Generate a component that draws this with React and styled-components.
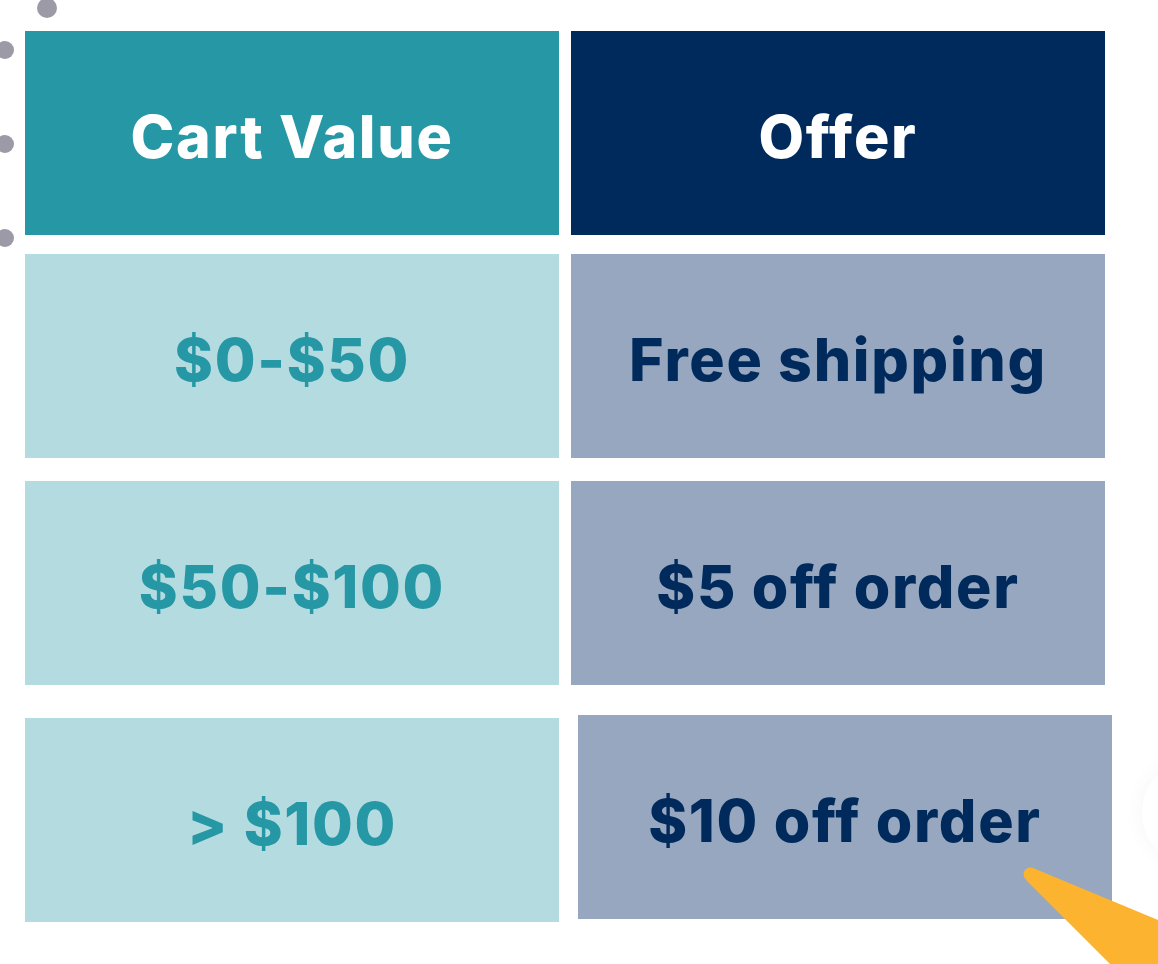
import styled, { createGlobalStyle } from "styled-components";

const GlobalStyle = createGlobalStyle`
  html, body {
    margin: 0;
    padding: 0;
    background: #fff;
    overflow: hidden;
  }
  body {
    font-family: Inter, "Open Sans", "Liberation Sans", sans-serif;
  }
`;

const palette = {
  teal: "#2697a5",
  navy: "#002a5c",
  tealLight: "#b4dbe0",
  navyLight: "#97a7bf",
};

const rows = [
  { value: "$0-$50", offer: "Free shipping", gap: 19 },
  { value: "$50-$100", offer: "$5 off order", gap: 23 },
  { value: "> $100", offer: "$10 off order", gap: 33, shifted: true },
];

const Page = styled.div`
  position: relative;
  width: 1158px;
  height: 964px;
  padding: 31px 0 0 25px;
  box-sizing: border-box;
  overflow: hidden;
`;

const Table = styled.div`
  display: flex;
  flex-direction: column;
  width: 1080px;
`;

const Row = styled.div`
  display: grid;
  grid-template-columns: 534px 534px;
  column-gap: 12px;
  margin-top: ${(p) => p.$gap || 0}px;
`;

const Cell = styled.div`
  height: 204px;
  display: flex;
  align-items: center;
  justify-content: center;
  padding-top: 6px;
  box-sizing: border-box;
  background: ${(p) => p.$bg};
  color: ${(p) => p.$fg};
  font-size: 59px;
  font-weight: 800;
  letter-spacing: 1.7px;
  ${(p) => p.$shifted && "margin: -3px -7px 0 7px;"}
`;

/* decorative dotted border peeking in from the left edge */
const DotRail = styled.div`
  position: absolute;
  left: -4px;
  top: 41px;
  display: flex;
  flex-direction: column;
  gap: 76px;
`;

const Dot = styled.span`
  display: block;
  width: ${(p) => p.$r * 2}px;
  height: ${(p) => p.$r * 2}px;
  border-radius: 50%;
  background: #9d9aa8;
`;

const TopDot = styled(Dot)`
  position: absolute;
  left: 37px;
  top: -2px;
`;

const Glow = styled.div`
  position: absolute;
  right: -64px;
  top: 765px;
  width: 80px;
  height: 95px;
  border-radius: 50%;
  background: #fff;
  box-shadow: 0 0 22px rgba(0, 0, 0, 0.045);
`;

const Pointer = styled.svg`
  position: absolute;
  left: 1000px;
  top: 850px;
`;

export default function App() {
  return (
    <>
      <GlobalStyle />
      <Page>
        <TopDot $r={10} />
        <DotRail>
          <Dot $r={9} />
          <Dot $r={9} />
          <Dot $r={9} />
        </DotRail>
        <Table>
          <Row>
            <Cell $bg={palette.teal} $fg="#fff">Cart Value</Cell>
            <Cell $bg={palette.navy} $fg="#fff">Offer</Cell>
          </Row>
          {rows.map((r) => (
            <Row key={r.value} $gap={r.gap}>
              <Cell $bg={palette.tealLight} $fg={palette.teal}>{r.value}</Cell>
              <Cell $bg={palette.navyLight} $fg={palette.navy} $shifted={r.shifted}>
                {r.offer}
              </Cell>
            </Row>
          ))}
        </Table>
        <Glow />
        <Pointer width="158" height="114" viewBox="0 0 158 114">
          <path
            d="M33 18 C28 16 22 20 24 27 C26 30 28 32 30 34 L110 114 L158 114 L158 70 Z"
            fill="#fbb330"
          />
        </Pointer>
      </Page>
    </>
  );
}
